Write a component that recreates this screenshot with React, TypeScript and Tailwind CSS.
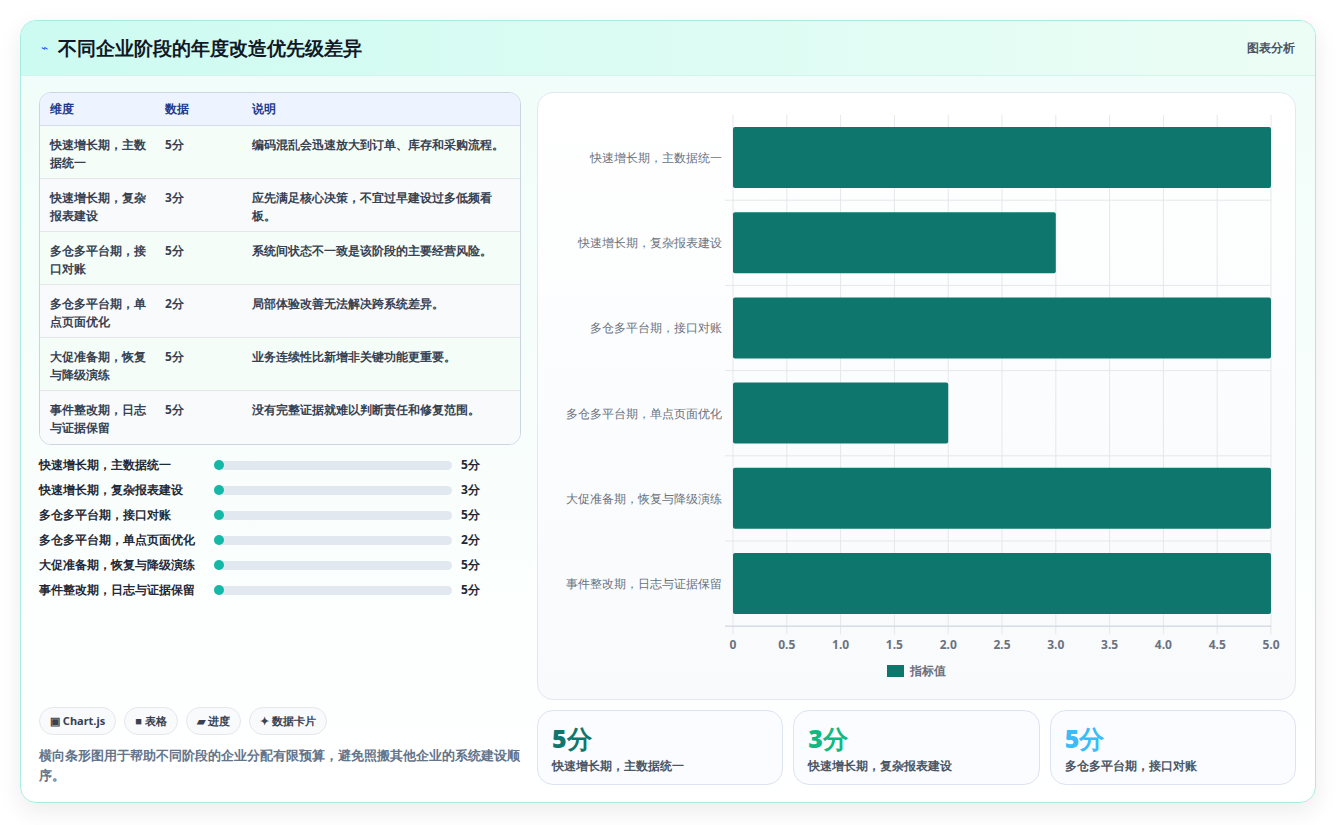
const rows = [
  { k: "快速增长期，主数据统一", v: 5, d: "编码混乱会迅速放大到订单、库存和采购流程。" },
  { k: "快速增长期，复杂报表建设", v: 3, d: "应先满足核心决策，不宜过早建设过多低频看板。" },
  { k: "多仓多平台期，接口对账", v: 5, d: "系统间状态不一致是该阶段的主要经营风险。" },
  { k: "多仓多平台期，单点页面优化", v: 2, d: "局部体验改善无法解决跨系统差异。" },
  { k: "大促准备期，恢复与降级演练", v: 5, d: "业务连续性比新增非关键功能更重要。" },
  { k: "事件整改期，日志与证据保留", v: 5, d: "没有完整证据就难以判断责任和修复范围。" },
]

function Chart() {
  const x0 = 195, x1 = 733, y0 = 22, band = 85.2
  const sx = (v: number) => x0 + ((x1 - x0) * v) / 5
  const ticks = [0, 0.5, 1, 1.5, 2, 2.5, 3, 3.5, 4, 4.5, 5]
  return (
    <svg width="757" height="607" className="block">
      {ticks.map((t) => (
        <line key={t} x1={sx(t)} x2={sx(t)} y1={y0} y2={y0 + band * 6 + 8} stroke="#e5e7eb" />
      ))}
      {rows.map((_, i) => (
        <line key={i} x1={x0 - 8} x2={x1} y1={y0 + band * (i + 1)} y2={y0 + band * (i + 1)} stroke="#e5e7eb" />
      ))}
      <line x1={x0 - 8} x2={x1} y1={y0 + band * 6} y2={y0 + band * 6} stroke="#cbd5e1" />
      {rows.map((r, i) => (
        <g key={r.k}>
          <rect x={x0} y={y0 + band * i + 12} width={sx(r.v) - x0} height={61} rx={2} fill="#0f766e" />
          <text x={x0 - 11} y={y0 + band * i + 47} textAnchor="end" fontSize="12" fill="#6b7280">{r.k}</text>
        </g>
      ))}
      {ticks.map((t) => (
        <text key={t} x={sx(t)} y={556} textAnchor="middle" fontSize="12" fontWeight="700" fill="#6b7280">
          {t === 0 || t === 5 ? (t === 0 ? "0" : "5.0") : t.toFixed(1)}
        </text>
      ))}
      <rect x={349} y={572} width={17} height={12} fill="#0f766e" />
      <text x={372} y={582} fontSize="12" fontWeight="700" fill="#6b7280">指标值</text>
    </svg>
  )
}

export default function App() {
  return (
    <div className="w-[1336px] h-[825px] bg-white pt-5 px-5 font-['Noto_Sans_CJK_SC',sans-serif] text-[#1f2937]">
      <div className="h-[783px] rounded-2xl border border-[#a7ece0] bg-gradient-to-b from-[#f0fdf9] to-white shadow-[0_8px_24px_rgba(0,0,0,0.08)] overflow-hidden flex flex-col">
        {/* header */}
        <div className="h-[55px] shrink-0 flex items-center justify-between px-5 bg-gradient-to-r from-[#ccfbf1] to-[#ecfdf5] border-b border-[#d1f5ec]">
          <div className="flex items-center gap-2.5">
            <span className="text-[#2563eb] text-xs">⌁</span>
            <h1 className="text-[19px] font-bold text-[#111827]">不同企业阶段的年度改造优先级差异</h1>
          </div>
          <span className="text-[12px] font-bold text-[#4b5563]">图表分析</span>
        </div>

        <div className="flex-1 flex gap-4 pl-[18px] pr-[19px] pt-[16px] pb-[17px]">
          {/* left */}
          <div className="w-[484px] flex flex-col">
            <div className="rounded-xl border border-[#cbd5e1] overflow-hidden bg-white">
              <div className="h-[33px] flex items-center bg-[#eef4ff] border-b border-[#d6dde8] text-[12px] font-bold text-[#1e3a8a]">
                <div className="w-[125px] pl-[10px]">维度</div>
                <div className="w-[87px]">数据</div>
                <div>说明</div>
              </div>
              {rows.map((r, i) => (
                <div key={r.k} className={`h-[53px] flex pt-[10px] text-[12px] font-bold text-[#374151] leading-[18px] ${i < 5 ? "border-b border-[#e5e7eb]" : ""} ${i % 2 === 0 ? "bg-[#f4fdf8]" : "bg-[#f8fafc]"}`}>
                  <div className="w-[125px] pl-[10px] pr-3">{r.k}</div>
                  <div className="w-[87px]">{r.v}分</div>
                  <div className="flex-1 pr-3">{r.d}</div>
                </div>
              ))}
            </div>

            <div className="mt-[11px] flex flex-col gap-[7px]">
              {rows.map((r) => (
                <div key={r.k} className="h-[18px] flex items-center text-[12px] font-bold text-[#1f2937]">
                  <div className="w-[175px]">{r.k}</div>
                  <div className="w-[238px] h-[9px] rounded-full bg-[#e2e8f0] relative">
                    <div className="absolute left-0 top-[-1px] w-[10px] h-[10px] rounded-full bg-[#14b8a6]" />
                  </div>
                  <div className="ml-[9px]">{r.v}分</div>
                </div>
              ))}
            </div>

            <div className="mt-auto flex gap-2 mb-[10px]">
              {["▣ Chart.js", "■ 表格", "▰ 进度", "✦ 数据卡片"].map((c) => (
                <span key={c} className="h-[28px] px-[10px] flex items-center rounded-full border border-[#e5e7eb] bg-[#f8fafc] text-[11px] font-bold text-[#374151]">{c}</span>
              ))}
            </div>
            <p className="text-[13px] font-bold text-[#64748b] leading-[20px]">横向条形图用于帮助不同阶段的企业分配有限预算，避免照搬其他企业的系统建设顺序。</p>
          </div>

          {/* right */}
          <div className="flex-1 flex flex-col gap-[10px]">
            <div className="h-[608px] rounded-2xl border border-[#e2e8f0] bg-gradient-to-b from-white to-[#f8fafc]">
              <Chart />
            </div>
            <div className="flex-1 grid grid-cols-3 gap-[10px]">
              {[
                { v: "5分", c: "text-[#0f766e]", l: rows[0].k },
                { v: "3分", c: "text-[#10b981]", l: rows[1].k },
                { v: "5分", c: "text-[#38bdf8]", l: rows[2].k },
              ].map((s, i) => (
                <div key={i} className="rounded-2xl border border-[#dbe4f0] bg-[#fafcff] px-[14px] pt-[10px]">
                  <div className={`text-[25px] font-black leading-[34px] ${s.c}`}>{s.v}</div>
                  <div className="text-[12px] font-bold text-[#4b5563] mt-[2px]">{s.l}</div>
                </div>
              ))}
            </div>
          </div>
        </div>
      </div>
    </div>
  )
}
